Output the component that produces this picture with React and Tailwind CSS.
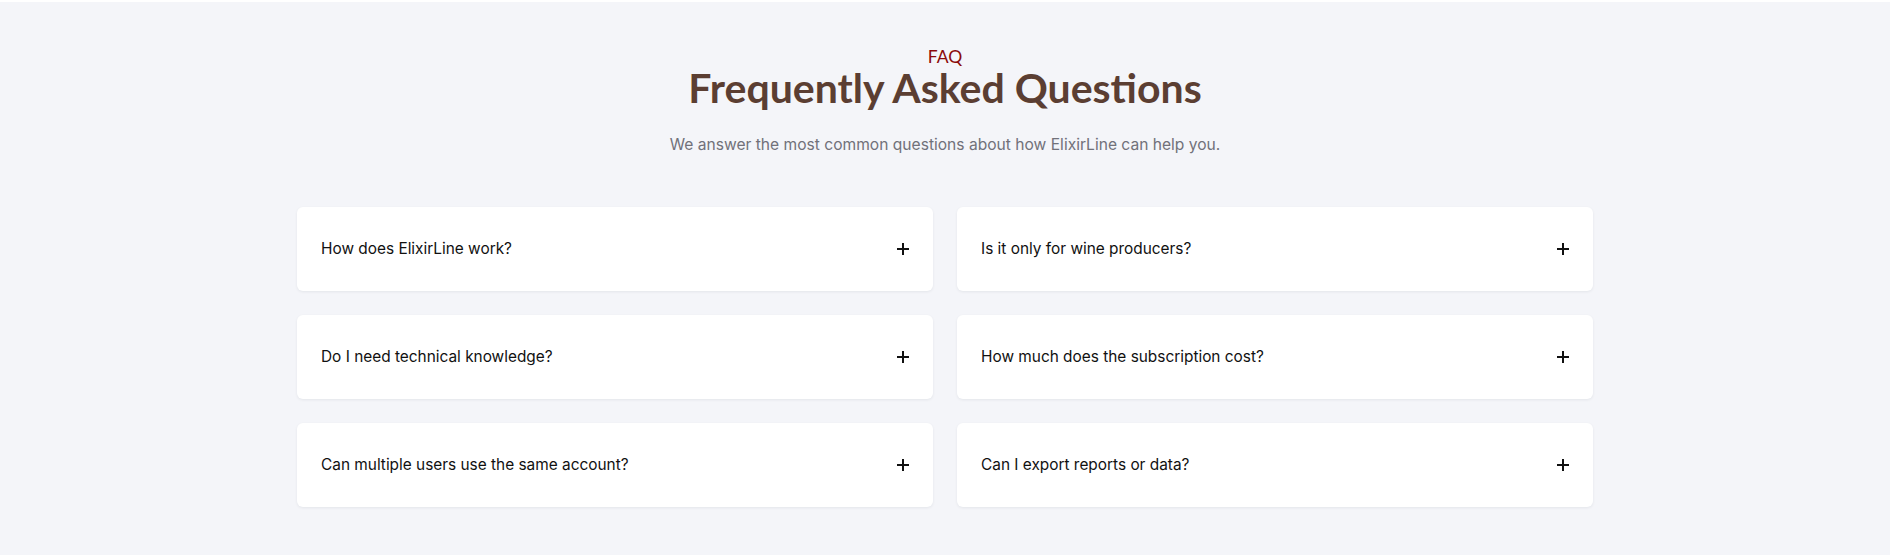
const questions = [
  'How does ElixirLine work?',
  'Is it only for wine producers?',
  'Do I need technical knowledge?',
  'How much does the subscription cost?',
  'Can multiple users use the same account?',
  'Can I export reports or data?',
];

const PlusIcon = () => (
  <svg width="12" height="12" viewBox="0 0 12 12" className="shrink-0 text-[#111111]">
    <path d="M6 0v12M0 6h12" stroke="currentColor" strokeWidth="2" />
  </svg>
);

const FaqItem = ({ question }) => {
  return (
    <button className="w-full h-[84px] bg-white rounded-md shadow-[0_1px_3px_rgba(15,23,42,0.07)] px-6 flex items-center justify-between text-left">
      <span className="text-[15.4px] text-[#111111]">{question}</span>
      <PlusIcon />
    </button>
  );
};

const App = () => {
  return (
    <div className="bg-white min-h-[560px] pt-[2px] font-['Inter','Liberation_Sans',sans-serif]">
      <section className="bg-[#f4f5f9] pt-[44px] pb-12">
        <div className="text-center">
          <p className="text-[17.5px] leading-[22px] text-[#8b0a0a] font-['Lato','Liberation_Sans',sans-serif]">FAQ</p>
          <h2 className="text-[41px] leading-[40px] font-bold text-[#5b3e32] font-['Lato','Liberation_Sans',sans-serif]">
            Frequently Asked Questions
          </h2>
          <p className="mt-[25px] text-[15.6px] leading-6 text-[#71717a]">
            We answer the most common questions about how ElixirLine can help you.
          </p>
        </div>
        <div className="max-w-[1296px] mx-auto mt-[50px] grid grid-cols-2 gap-6">
          {questions.map((q) => (
            <FaqItem key={q} question={q} />
          ))}
        </div>
      </section>
    </div>
  );
};

export default App;
